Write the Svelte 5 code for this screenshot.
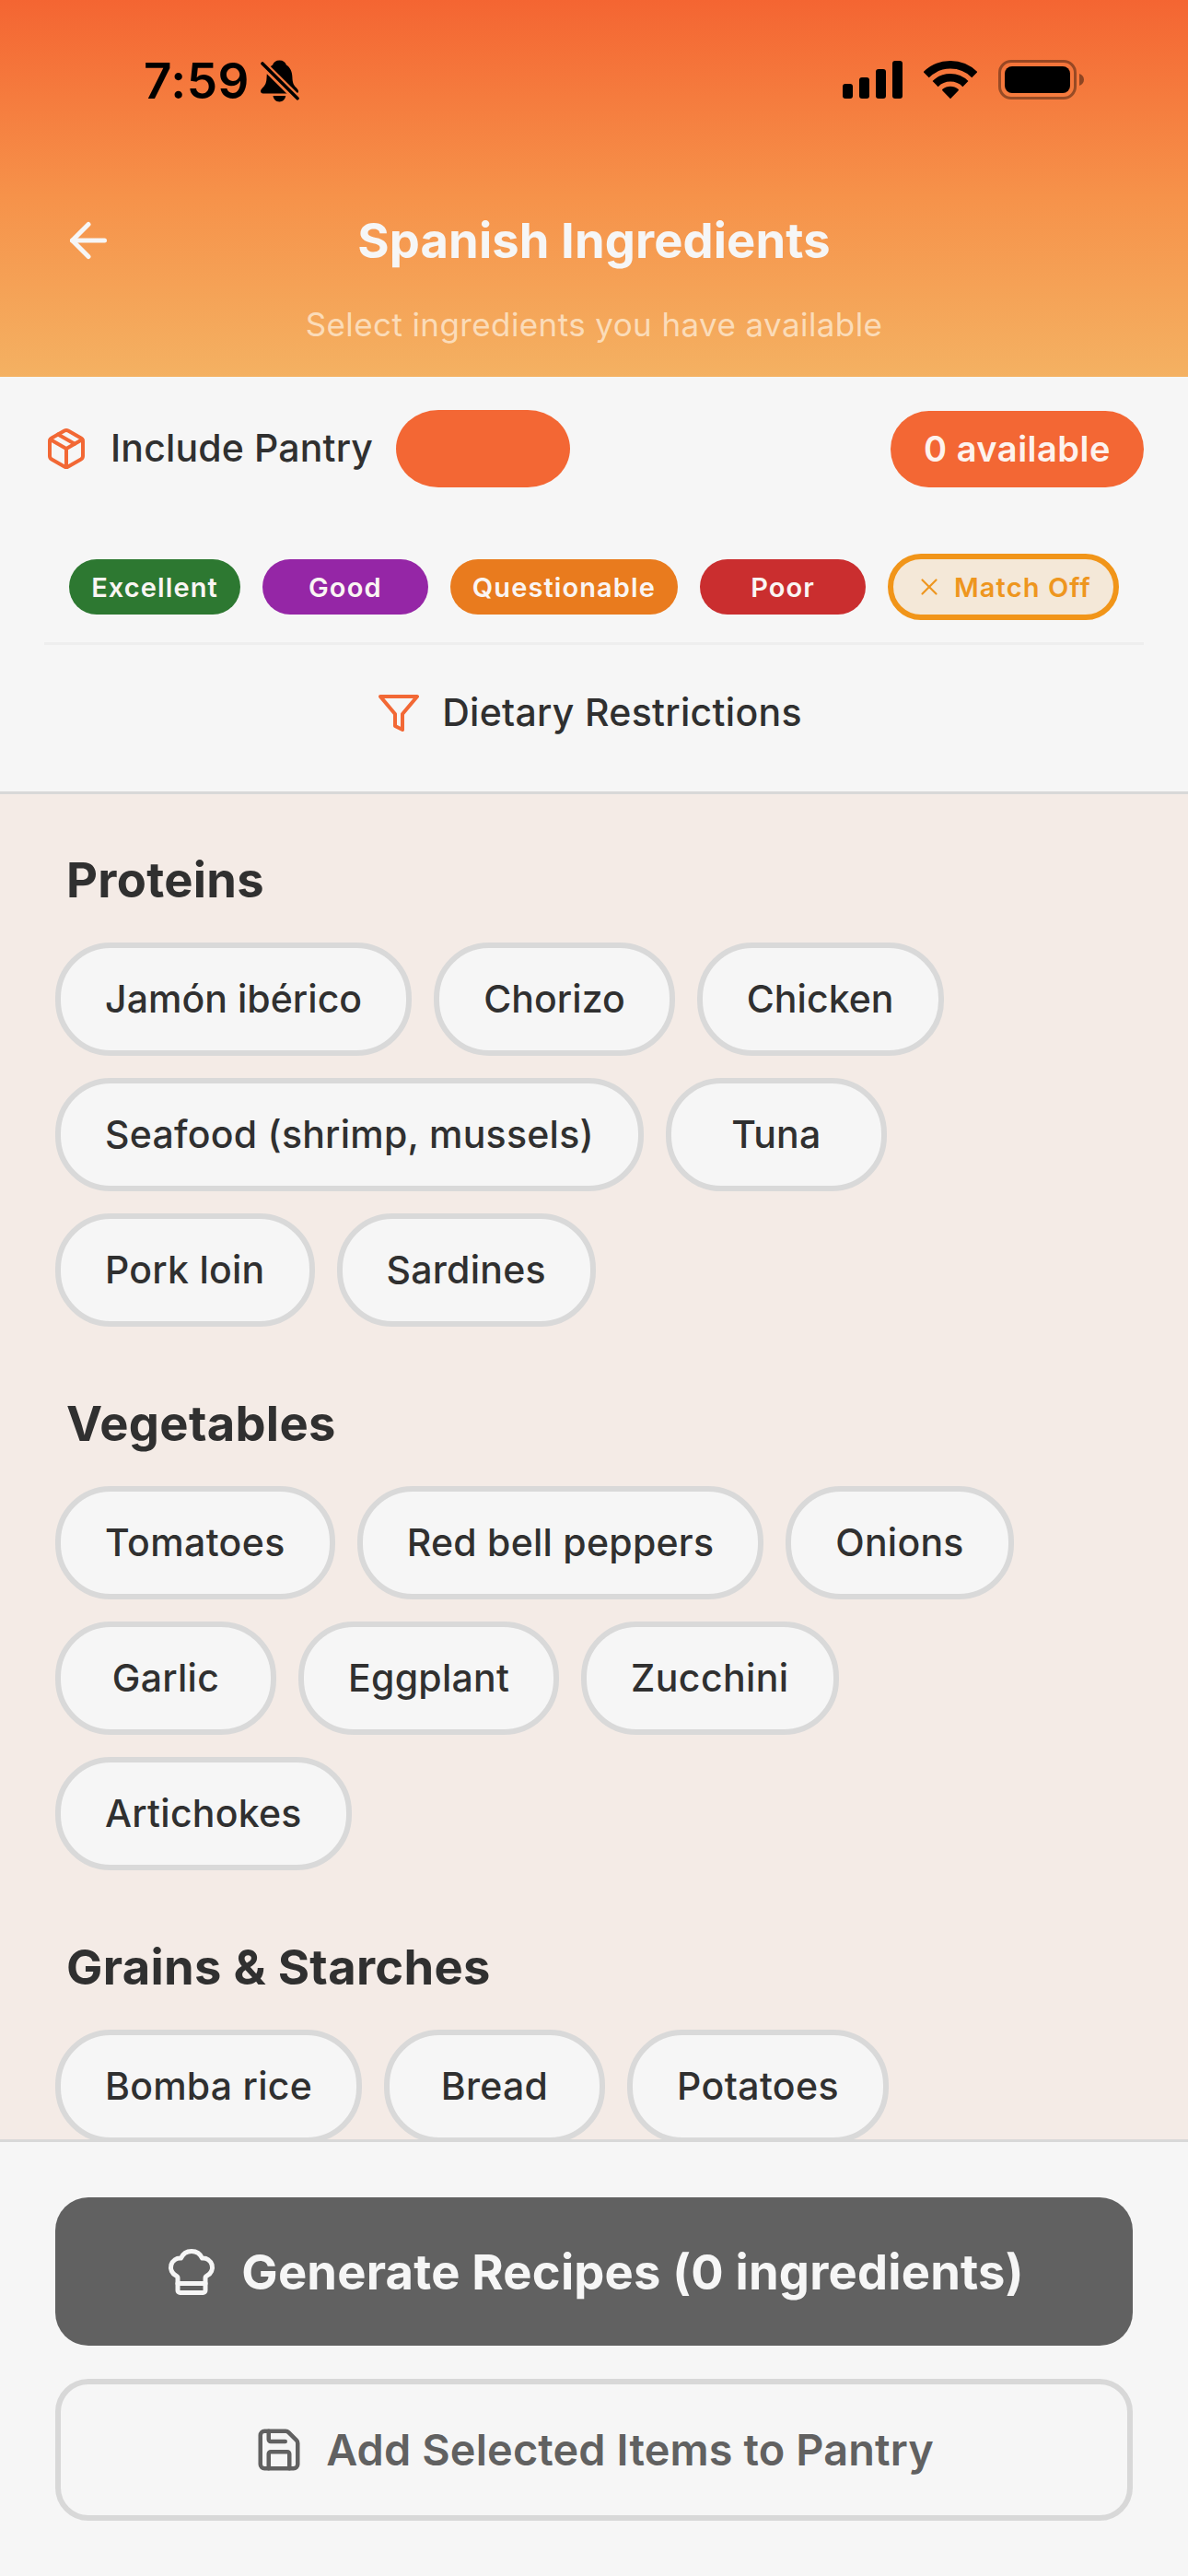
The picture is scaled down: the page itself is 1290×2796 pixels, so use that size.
<script>
  const legend = [
    { label: 'Excellent', tone: 'excellent' },
    { label: 'Good', tone: 'good' },
    { label: 'Questionable', tone: 'questionable' },
    { label: 'Poor', tone: 'poor' }
  ];

  const sections = [
    {
      title: 'Proteins',
      items: ['Jamón ibérico', 'Chorizo', 'Chicken', 'Seafood (shrimp, mussels)', 'Tuna', 'Pork loin', 'Sardines']
    },
    {
      title: 'Vegetables',
      items: ['Tomatoes', 'Red bell peppers', 'Onions', 'Garlic', 'Eggplant', 'Zucchini', 'Artichokes']
    },
    {
      title: 'Grains & Starches',
      items: ['Bomba rice', 'Bread', 'Potatoes']
    }
  ];

  const tight = new Set(['Jamón ibérico', 'Chorizo', 'Chicken']);
  const loose = new Set(['Tomatoes', 'Potatoes', 'Zucchini']);
</script>

<div class="screen">
  <header>
    <div class="status">
      <div class="clock">
        <span class="time">7:59</span>
        <svg class="bell" viewBox="13 15 42 46">
          <mask id="slash-cut">
            <rect x="0" y="0" width="70" height="70" fill="#fff" />
            <path d="M10 14.5 58 62" stroke="#000" stroke-width="8.6" />
          </mask>
          <g mask="url(#slash-cut)">
            <path d="M33.5 15.5c-4 0-6.600 2-7.400 5C21.800 23 19.800 27.500 19.600 33.500c-.2 6-1.300 8.500-4.200 11.500-1.700 1.800-2.400 2.800-2.400 4.100 0 1.400 1 2.300 2.600 2.300h35.900c1.500 0 2.500-.9 2.500-2.300 0-1.300-.8-2.300-2.500-4.100-2.900-3-3.900-5.500-4.100-11.500-.2-6-2.300-10.500-6.500-13-.8-3-3.400-5-7.400-5z" />
          </g>
          <path d="M26.500 54h13.700c-.6 3.900-3.200 6.400-6.800 6.400s-6.300-2.500-6.900-6.400z" />
          <path d="M15 19 53 56.800" stroke="#000" stroke-width="3.600" stroke-linecap="round" />
        </svg>
      </div>
      <div class="radios">
        <svg width="65" height="43" viewBox="16 15 65 43">
          <rect x="16" y="41" width="11" height="16" rx="3" />
          <rect x="34" y="34" width="11" height="23" rx="3" />
          <rect x="52" y="25" width="11" height="32" rx="3" />
          <rect x="70" y="16" width="11" height="41" rx="3" />
        </svg>
        <svg width="58" height="43" viewBox="103.500 15 58 43">
          <g fill="none" stroke="#000" stroke-width="8.600">
            <path d="M106.200 31.200a37.200 37.200 0 0 1 52.600 0" />
            <path d="M116.100 41.100a23.200 23.200 0 0 1 32.800 0" />
          </g>
          <path d="M132.500 57.200 124 48.600c-.6-.6-.6-1.300 0-1.800a13 13 0 0 1 17 0c.6.500.6 1.200 0 1.800z" />
        </svg>
        <svg width="93" height="43" viewBox="184 15 93 43">
          <rect x="185.500" y="16.500" width="82" height="40" rx="12.500" fill="none" stroke="#000" stroke-opacity=".38" stroke-width="3" />
          <path d="M272 30c3 .8 5 3.500 5 6.500s-2 5.700-5 6.500z" fill-opacity=".42" />
          <rect x="191" y="22" width="71" height="29" rx="8" />
        </svg>
      </div>
    </div>
    <div class="titlebar">
      <svg class="line back" viewBox="0 0 24 24"><path d="m12 19-7-7 7-7" /><path d="M19 12H5" /></svg>
      <h1>Spanish Ingredients</h1>
    </div>
    <p class="subtitle">Select ingredients you have available</p>
  </header>

  <section class="filters">
    <div class="pantry">
      <svg class="line package" viewBox="0 0 24 24">
        <path d="M11 21.730a2 2 0 0 0 2 0l7-4A2 2 0 0 0 21 16V8a2 2 0 0 0-1-1.730l-7-4a2 2 0 0 0-2 0l-7 4A2 2 0 0 0 3 8v8a2 2 0 0 0 1 1.730z" />
        <path d="M12 22V12" />
        <path d="m3.300 7 8.700 5 8.700-5" />
        <path d="m7.500 4.270 9 5.150" />
      </svg>
      <span class="label">Include Pantry</span>
      <div class="toggle"></div>
      <div class="count">0 available</div>
    </div>

    <div class="legend">
      {#each legend as l}
        <span class="pill {l.tone}">{l.label}</span>
      {/each}
      <span class="pill match">
        <svg class="line" viewBox="0 0 24 24"><path d="M18 6 6 18" /><path d="m6 6 12 12" /></svg>
        Match Off
      </span>
    </div>

    <div class="dietary">
      <svg class="line" viewBox="0 0 24 24"><polygon points="22 3 2 3 10 12.460 10 19 14 21 14 12.460 22 3" /></svg>
      <span class="label">Dietary Restrictions</span>
    </div>
  </section>

  <main>
    {#each sections as s}
      <section class="group">
        <h2>{s.title}</h2>
        <div class="chips">
          {#each s.items as item}
            <div class="chip" class:tight={tight.has(item)} class:loose={loose.has(item)}>{item}</div>
          {/each}
        </div>
      </section>
    {/each}
  </main>

  <footer>
    <div class="button primary">
      <svg class="line" viewBox="0 0 24 24">
        <path d="M17 21a1 1 0 0 0 1-1v-5.350c0-.457.316-.844.727-1.041a4 4 0 0 0-2.134-7.589 5 5 0 0 0-9.186 0 4 4 0 0 0-2.134 7.588c.411.198.727.585.727 1.041V20a1 1 0 0 0 1 1Z" />
        <path d="M6 17h12" />
      </svg>
      <span>Generate Recipes (0 ingredients)</span>
    </div>
    <div class="button secondary">
      <svg class="line" viewBox="0 0 24 24">
        <path d="M15.200 3a2 2 0 0 1 1.400.6l3.800 3.800a2 2 0 0 1 .6 1.400V19a2 2 0 0 1-2 2H5a2 2 0 0 1-2-2V5a2 2 0 0 1 2-2z" />
        <path d="M17 21v-7a1 1 0 0 0-1-1H8a1 1 0 0 0-1 1v7" />
        <path d="M7 3v4a1 1 0 0 0 1 1h7" />
      </svg>
      <span>Add Selected Items to Pantry</span>
    </div>
  </footer>
</div>

<style>
  .screen {
    width: 1290px;
    height: 2796px;
    display: flex;
    flex-direction: column;
    overflow: hidden;
    background: #f6f6f6;
    color: #303030;
    font-family: Inter, 'Liberation Sans', sans-serif;
    white-space: nowrap;
  }
  .screen * {
    box-sizing: border-box;
  }
  svg {
    display: block;
    flex: none;
  }
  .line {
    fill: none;
    stroke: currentColor;
    stroke-width: 2;
    stroke-linecap: round;
    stroke-linejoin: round;
  }

  header {
    flex: none;
    height: 409px;
    background: linear-gradient(#f46532, #f6924a 52%, #f4b162);
  }
  .status {
    height: 176px;
    padding: 0 113px 0 156px;
    display: flex;
    align-items: center;
    justify-content: space-between;
  }
  .clock {
    display: flex;
    align-items: center;
    gap: 12px;
  }
  .time {
    color: #000;
    font-size: 53px;
    font-weight: 600;
    letter-spacing: 0.5px;
  }
  .bell {
    width: 42px;
    height: 46px;
  }
  .radios {
    display: flex;
    gap: 23px;
    margin-bottom: 3px;
  }
  .titlebar {
    display: grid;
    grid-template-columns: 60px 1fr 60px;
    align-items: center;
    height: 72px;
    margin: 49px 66px 0;
    color: #f6f6f6;
  }
  .back {
    width: 60px;
    height: 60px;
  }
  h1 {
    margin: 0;
    text-align: center;
    font-size: 52.500px;
    font-weight: 700;
    letter-spacing: 0.1px;
  }
  .subtitle {
    margin: 28px 0 0;
    text-align: center;
    font-size: 35px;
    line-height: 54px;
    letter-spacing: 0.400px;
    color: #fbdcb9;
  }

  .filters {
    flex: none;
    height: 453px;
    padding: 36px 48px 0;
    border-bottom: 3px solid #d8d8d8;
  }
  .pantry {
    height: 84px;
    display: flex;
    align-items: center;
  }
  .package {
    width: 48px;
    height: 48px;
    margin-right: 24px;
    color: #f26835;
  }
  .label {
    padding-bottom: 2px;
    font-size: 41px;
    font-weight: 500;
    letter-spacing: 0.150px;
  }
  .toggle {
    width: 189px;
    height: 84px;
    margin-left: 25px;
    border-radius: 46px / 42px;
    background: #f36734;
  }
  .count {
    height: 83px;
    margin-left: auto;
    padding: 0 36px;
    display: flex;
    align-items: center;
    border-radius: 42px;
    background: #f36734;
    color: #fdf3ee;
    font-size: 38px;
    font-weight: 600;
    letter-spacing: 0.500px;
  }
  .legend {
    height: 171px;
    padding: 72px 0 24px;
    display: flex;
    align-items: center;
    justify-content: center;
    gap: 24px;
    border-bottom: 3px solid #eee;
  }
  .pill {
    height: 60px;
    min-width: 180px;
    padding: 0 24px;
    display: flex;
    align-items: center;
    justify-content: center;
    border-radius: 30px;
    font-size: 29px;
    font-weight: 600;
    letter-spacing: 1.100px;
    color: #faf5f3;
  }
  .excellent {
    background: #2d7831;
  }
  .good {
    background: #9526a6;
  }
  .questionable {
    background: #e97b1e;
  }
  .poor {
    background: #ca2e2f;
  }
  .match {
    height: 72px;
    gap: 12px;
    border: 6px solid #f19519;
    border-radius: 36px;
    background: #f4e8d8;
    color: #ee961f;
  }
  .match svg {
    width: 30px;
    height: 30px;
    stroke-width: 1.700;
  }
  .dietary {
    height: 148px;
    padding-right: 10px;
    display: flex;
    align-items: center;
    justify-content: center;
    gap: 23px;
  }
  .dietary .label {
    letter-spacing: 0.3px;
  }
  .dietary svg {
    width: 48px;
    height: 48px;
    color: #f26835;
  }

  main {
    flex: 1;
    min-height: 0;
    overflow: hidden;
    padding: 60px 60px 0;
    background: #f4ebe6;
  }
  .group {
    margin-bottom: 72px;
  }
  h2 {
    margin: 0 0 35px;
    padding-left: 12px;
    font-size: 52.500px;
    line-height: 66px;
    font-weight: 700;
    letter-spacing: 0.3px;
  }
  .chips {
    display: flex;
    flex-wrap: wrap;
    gap: 24px;
  }
  .chip {
    height: 123px;
    min-width: 240px;
    padding: 0 48px 2px;
    display: flex;
    align-items: center;
    justify-content: center;
    border: 6px solid #d9d9d9;
    border-radius: 60px;
    background: #f6f6f6;
    font-size: 41px;
    font-weight: 500;
    letter-spacing: 0.250px;
  }
  .tight {
    letter-spacing: 0.05px;
  }
  .loose {
    letter-spacing: 0.4px;
  }

  footer {
    flex: none;
    height: 474px;
    padding: 60px 60px 0;
    border-top: 3px solid #d8d8d8;
    background: #f6f6f6;
  }
  .button {
    display: flex;
    align-items: center;
    justify-content: center;
    gap: 24px;
    border-radius: 36px;
  }
  .primary {
    height: 161px;
    background: #616161;
    color: #f6f6f6;
    font-size: 52.500px;
    font-weight: 700;
    letter-spacing: 0.2px;
  }
  .primary svg {
    width: 60px;
    height: 60px;
  }
  .secondary {
    height: 154px;
    margin-top: 36px;
    border: 6px solid #d8d8d8;
    color: #616161;
    font-size: 46.800px;
    font-weight: 600;
    letter-spacing: 0.15px;
  }
  .secondary svg {
    width: 54px;
    height: 54px;
  }
</style>
